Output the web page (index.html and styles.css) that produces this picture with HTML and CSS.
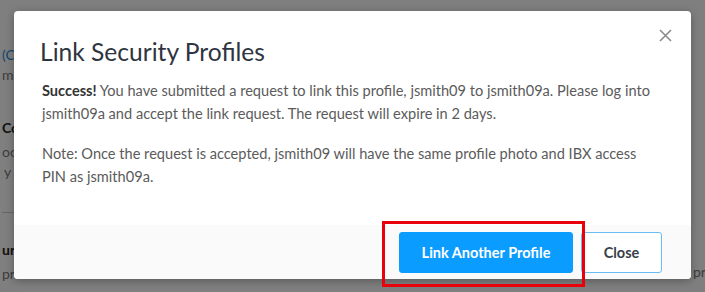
FILE: index.html
```html
<!DOCTYPE html>
<html lang="en">
<head>
    <meta charset="UTF-8">
    <meta name="viewport" content="width=device-width, initial-scale=1.0">
    <title>Link Security Profiles</title>
    <link rel="stylesheet" href="styles.css">
</head>
<body>
    <!-- page behind the dialog (only its edges show) -->
    <div class="page">
        <div class="page-col">
            <p class="page-link">(C</p>
            <p class="page-muted">mit</p>
            <p class="page-title">Co</p>
            <p class="page-muted">oc</p>
            <p class="page-muted indent">y</p>
            <hr class="page-rule">
            <p class="page-title">uri</p>
            <p class="page-muted">pr</p>
        </div>
        <div class="page-col page-col-right">
            <p class="page-muted">pre</p>
        </div>
    </div>
    <div class="overlay"></div>

    <!-- dialog -->
    <div class="modal">
        <div class="modal-header">
            <h2 class="modal-title">Link Security Profiles</h2>
            <button class="modal-close" aria-label="Close">
                <svg width="13" height="13" viewBox="0 0 13 13">
                    <path d="M1 1L12 12M12 1L1 12" stroke="#8a8a8a" stroke-width="1.6" fill="none"/>
                </svg>
            </button>
        </div>
        <div class="modal-body">
            <p><strong>Success!</strong> You have submitted a request to link this profile, jsmith09 to jsmith09a. Please log into jsmith09a and accept the link request. The request will expire in 2 days.</p>
            <p>Note: Once the request is accepted, jsmith09 will have the same profile photo and IBX access PIN as jsmith09a.</p>
        </div>
        <div class="modal-footer">
            <button class="btn btn-primary">Link Another Profile</button>
            <button class="btn btn-default">Close</button>
        </div>
    </div>

    <!-- annotation -->
    <div class="highlight"></div>
</body>
</html>
```
FILE: styles.css
```css
body {
    margin: 0;
    font-family: "Lato", "Open Sans", sans-serif;
    background: #ffffff;
    overflow: hidden;
    width: 705px;
    height: 292px;
    position: relative;
}

/* page behind ==================================================== */

.page {
    display: flex;
    justify-content: space-between;
    font-size: 14px;
}

.page-col {
    width: 14px;
    white-space: nowrap;
    padding-top: 45px;
    padding-left: 2px;
    box-sizing: border-box;
}

.page-col-right {
    width: 12px;
    padding-top: 262px;
    padding-left: 0;
}

.page p {
    margin: 0;
    line-height: 20px;
}

.page-link {
    color: #1a8fdc;
}

.page-muted {
    color: #7a7a7a;
}

.page-title {
    color: #222;
    font-weight: bold;
    margin-top: 33px !important;
}

.indent {
    padding-left: 2px;
}

.page-rule {
    border: 0;
    border-top: 1px solid #ccc;
    margin: 30px 0 27px 0;
}

.page-rule + .page-title {
    margin-top: 0 !important;
}

.page-col .page-title + .page-muted {
    margin-top: 4px;
}

.overlay {
    position: absolute;
    inset: 0;
    background: rgba(0, 0, 0, 0.5);
}

/* dialog ========================================================= */

.modal {
    position: absolute;
    left: 14px;
    top: 11px;
    width: 677px;
    height: 268px;
    background: #fff;
    border-radius: 4px;
    box-shadow: 0 2px 8px rgba(0, 0, 0, 0.3);
    display: flex;
    flex-direction: column;
    overflow: hidden;
}

.modal-header {
    display: flex;
    justify-content: space-between;
    align-items: flex-start;
    padding: 26px 19px 0 26px;
}

.modal-title {
    margin: 0;
    font-size: 24.6px;
    font-weight: normal;
    color: #2f3540;
    line-height: 30px;
}

.modal-close {
    background: none;
    border: 0;
    padding: 0;
    margin-top: -8px;
    cursor: pointer;
}

.modal-body {
    flex: 1;
    padding: 12px 28px 0 28px;
    font-size: 14.6px;
    line-height: 23px;
    color: #5b5b5b;
}

.modal-body p {
    margin: 0 0 17px 0;
}

.modal-body strong {
    color: #333;
}

.modal-footer {
    background: #fafafa;
    height: 54px;
    box-sizing: border-box;
    padding: 7px 29px 0 0;
    display: flex;
    justify-content: flex-end;
    align-items: flex-start;
    gap: 8px;
}

.btn {
    font-family: "Lato", "Open Sans", sans-serif;
    font-size: 14.5px;
    font-weight: bold;
    height: 41px;
    border-radius: 3px;
    box-sizing: border-box;
    cursor: pointer;
}

.btn-primary {
    width: 174px;
    background: #0a9cff;
    border: 1px solid #0a9cff;
    color: #fff;
}

.btn-default {
    width: 81px;
    background: #fff;
    border: 1px solid #6bbcf5;
    color: #3a3f48;
}

/* annotation ===================================================== */

.highlight {
    position: absolute;
    left: 382px;
    top: 221px;
    width: 203px;
    height: 66px;
    box-sizing: border-box;
    border: 3px solid #e8000b;
}
```
